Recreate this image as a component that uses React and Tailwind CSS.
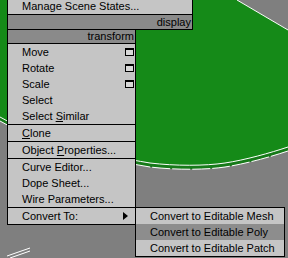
import React from 'react';

const font = { fontFamily: '"Liberation Sans", Arial, sans-serif' };

function WindowIcon() {
  return <span className="block w-[9px] h-[8px] border border-black border-t-2 bg-[#d8d8d8]" />;
}

function Row({ children, icon, arrow, highlight }) {
  return (
    <div
      className={`relative flex items-center h-[16px] pl-[14px] ${icon ? 'pr-[1px]' : 'pr-[7px]'} ${
        highlight ? 'bg-[#8d8d8d]' : ''
      }`}
    >
      <span className="flex-1 leading-[16px] whitespace-nowrap">{children}</span>
      {icon && <WindowIcon />}
      {arrow && (
        <span className="block w-0 h-0 border-y-[4px] border-y-transparent border-l-[5px] border-l-black" />
      )}
    </div>
  );
}

function Viewport() {
  return (
    <svg className="absolute inset-0" width="288" height="258" viewBox="0 0 288 258">
      <rect width="288" height="258" fill="#7f7f7f" />
      <path
        d="M0,0 L237,0 L288,30 L288,151 C270,157 245,164 225,167 C205,170 175,170 150,167 C100,159 40,144 0,121 Z"
        fill="#167a19"
      />
      <path
        d="M0,0 L237,0 L288,30 L288,147 C270,153 245,160 225,163 C205,166 175,166 150,163 C100,155 40,140 0,117 Z"
        fill="#158a18"
      />
      <line x1="237" y1="0" x2="288" y2="30" stroke="#fff" strokeWidth="1" />
      <path
        d="M288,147 C270,153 245,160 225,163 C205,166 175,166 150,163 C100,155 40,140 0,117"
        fill="none"
        stroke="#fff"
        strokeWidth="1"
      />
      <path
        d="M288,151 C270,157 245,164 225,167 C205,170 175,170 150,167 C100,159 40,144 0,121"
        fill="none"
        stroke="#fff"
        strokeWidth="1"
        strokeDasharray="18 2"
      />
      <line x1="7" y1="256" x2="30" y2="248" stroke="#fff" strokeWidth="1" />
      <line x1="10" y1="258" x2="30" y2="251" stroke="#fff" strokeWidth="1" />
    </svg>
  );
}

export default function App() {
  return (
    <div className="relative w-[288px] h-[258px] overflow-hidden text-[11px] text-black" style={font}>
      <Viewport />
      <div className="relative pl-[7px]">
        {/* display quad */}
        <div className="w-[186px] border-x border-b border-black bg-[#c5c5c5]">
          <div className="h-[14px] pl-[14px] leading-[13px] whitespace-nowrap">Manage Scene States...</div>
          <div className="h-[15px] border-t border-black bg-[#8a8a8a] text-right pr-[1px] leading-[14px]">
            display
          </div>
        </div>
        {/* transform quad */}
        <div className="relative w-[129px] border-x border-b border-black bg-[#c5c5c5]">
          <div className="h-[14px] border-b border-black bg-[#8a8a8a] text-right pr-[1px] leading-[13px]">
            transform
          </div>
          <Row icon>Move</Row>
          <Row icon>Rotate</Row>
          <Row icon>Scale</Row>
          <Row>Select</Row>
          <Row>
            Select <u>S</u>imilar
          </Row>
          <div className="border-t border-black">
            <Row>
              <u>C</u>lone
            </Row>
          </div>
          <div className="border-t border-black">
            <Row>
              Object <u>P</u>roperties...
            </Row>
          </div>
          <div className="border-t border-black">
            <Row>Curve Editor...</Row>
            <Row>Dope Sheet...</Row>
            <Row>Wire Parameters...</Row>
          </div>
          <div className="relative border-t border-black">
            <Row arrow>Convert To:</Row>
            <div className="absolute left-full -top-px w-[150px] border border-black bg-[#c5c5c5]">
              <Row>Convert to Editable Mesh</Row>
              <Row highlight>Convert to Editable Poly</Row>
              <Row>Convert to Editable Patch</Row>
            </div>
          </div>
        </div>
      </div>
    </div>
  );
}
